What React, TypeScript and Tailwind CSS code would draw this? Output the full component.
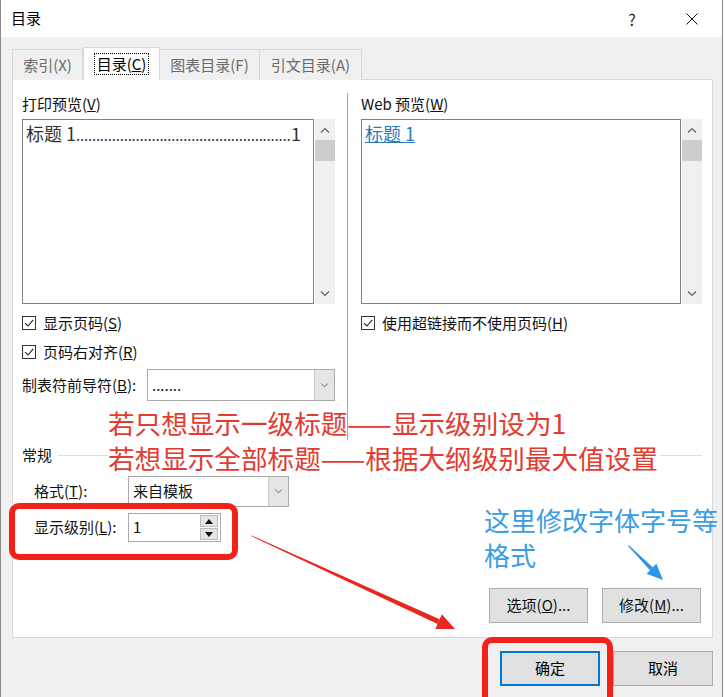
import React from 'react';

const CJK = "font-['Noto_Sans_CJK_SC','Microsoft_YaHei',sans-serif]";

function Check() {
  return (
    <span className="w-[14px] h-[14px] border border-[#333] bg-white flex items-center justify-center shrink-0">
      <svg viewBox="0 0 12 12" className="w-[12px] h-[12px]">
        <path d="M2 6.2 L5 9 L10.2 2.8" fill="none" stroke="#222" strokeWidth="1.1" />
      </svg>
    </span>
  );
}

function Chevron({ up }: { up?: boolean }) {
  return (
    <svg viewBox="0 0 10 6" className="w-[10px] h-[6px]">
      <path d={up ? 'M1 5.5 L5 1.5 L9 5.5' : 'M1 0.5 L5 4.5 L9 0.5'} fill="none" stroke="#606060" strokeWidth="1.2" />
    </svg>
  );
}

function ScrollBar() {
  return (
    <div className="w-[20px] ml-[1px] bg-[#f0f0f0] flex flex-col">
      <div className="h-[21px] flex items-center justify-center"><Chevron up /></div>
      <div className="h-[21px] bg-[#cdcdcd]" />
      <div className="flex-1" />
      <div className="h-[21px] flex items-center justify-center"><Chevron /></div>
    </div>
  );
}

function Combo({ width, height, text }: { width: string; height: string; text: string }) {
  return (
    <div className={`${width} ${height} border border-[#a9a9a9] bg-white flex`}>
      <div className="flex-1 pl-[4px] flex items-center text-[15px] text-[#111]">{text}</div>
      <div className="w-[20px] bg-[#e5e5e5] border-l border-[#c8c8c8] flex items-center justify-center">
        <svg viewBox="0 0 10 6" className="w-[9px] h-[5px]">
          <path d="M1 0.5 L5 4.5 L9 0.5" fill="none" stroke="#555" strokeWidth="1" />
        </svg>
      </div>
    </div>
  );
}

export default function App() {
  return (
    <div className={`relative w-[723px] h-[697px] overflow-hidden bg-[#f0f0f0] border-x border-[#8a8a8a] ${CJK}`}>
      {/* Title bar */}
      <div className="h-[37px] bg-white flex items-center pl-[10px]">
        <span className="text-[15px] text-black">目录</span>
        <span className="ml-auto text-[16px] text-[#222] w-[10px] text-center">?</span>
        <svg viewBox="0 0 12 12" className="w-[12px] h-[12px] ml-[49px] mr-[24px]">
          <path d="M0.5 0.5 L11.5 11.5 M11.5 0.5 L0.5 11.5" stroke="#111" strokeWidth="1" />
        </svg>
      </div>

      {/* Tabs */}
      <div className="flex items-end h-[33px] mt-[10px] pl-[11px] -mb-[1px] relative z-10 text-[15px]">
        <div className="w-[71px] h-[31px] border border-b-0 border-[#d9d9d9] bg-[#f0f0f0] flex items-center justify-center text-[#6a6a6a]">
          索引(X)
        </div>
        <div className="w-[77px] h-[33px] border border-b-0 border-[#d9d9d9] bg-white flex items-center justify-center text-black">
          <span className="border border-dotted border-black px-[2px] leading-[20px]">
            目录(<span className="underline">C</span>)
          </span>
        </div>
        <div className="w-[100px] h-[31px] border border-b-0 border-l-0 border-[#d9d9d9] bg-[#f0f0f0] flex items-center justify-center text-[#6a6a6a]">
          图表目录(F)
        </div>
        <div className="w-[102px] h-[31px] border border-b-0 border-l-0 border-[#d9d9d9] bg-[#f0f0f0] flex items-center justify-center text-[#6a6a6a]">
          引文目录(A)
        </div>
      </div>

      {/* Panel */}
      <div className="ml-[11px] w-[701px] h-[559px] border border-[#d9d9d9] bg-white flex flex-col pl-[9px] text-[15px] text-[#111]">
        <div className="flex mt-[13px]">
          {/* Left column */}
          <div className="w-[326px] border-r border-[#a6a6a6] pb-[39px]">
            <div className="h-[22px] leading-[22px]">打印预览(<span className="underline">V</span>)</div>
            <div className="flex mt-[4px] h-[185px]">
              <div className="w-[292px] border border-[#828282] bg-white">
                <div className="flex items-baseline pl-[3px] pr-[12px] pt-[1px] text-[18px] text-[#333] leading-[24px]">
                  <span className="whitespace-nowrap">标题 1</span>
                  <span className="whitespace-nowrap text-[15px] tracking-[-0.2px]">
                    ......................................................
                  </span>
                  <span className="ml-auto">1</span>
                </div>
              </div>
              <ScrollBar />
            </div>
            <div className="flex items-center gap-[7px] h-[22px] mt-[8px]">
              <Check />
              <span>显示页码(<span className="underline">S</span>)</span>
            </div>
            <div className="flex items-center gap-[7px] h-[22px] mt-[7px]">
              <Check />
              <span>页码右对齐(<span className="underline">R</span>)</span>
            </div>
            <div className="flex items-center h-[32px] mt-[6px]">
              <span className="w-[125px]">制表符前导符(<span className="underline">B</span>):</span>
              <Combo width="w-[188px]" height="h-[32px]" text="......." />
            </div>
          </div>

          {/* Right column */}
          <div className="pl-[13px]">
            <div className="h-[22px] leading-[22px]">Web 预览(<span className="underline">W</span>)</div>
            <div className="flex mt-[4px] h-[185px]">
              <div className="w-[320px] border border-[#828282] bg-white">
                <div className="pl-[3px] pt-[1px] text-[18px] leading-[24px] text-[#2b7cba] underline">标题 1</div>
              </div>
              <ScrollBar />
            </div>
            <div className="flex items-center gap-[7px] h-[22px] mt-[8px]">
              <Check />
              <span>使用超链接而不使用页码(<span className="underline">H</span>)</span>
            </div>
          </div>
        </div>

        {/* 常规 */}
        <div className="flex items-center h-[20px] mt-[5px]">
          <span>常规</span>
          <div className="flex-1 h-px bg-[#dcdcdc] ml-[6px] mr-[10px]" />
        </div>
        <div className="flex items-center mt-[11px] pl-[12px]">
          <span className="w-[94px]">格式(<span className="underline">T</span>):</span>
          <Combo width="w-[161px]" height="h-[31px]" text="来自模板" />
        </div>
        <div className="flex items-center mt-[6px] pl-[12px]">
          <span className="w-[94px]">显示级别(<span className="underline">L</span>):</span>
          <div className="w-[93px] h-[29px] border border-[#a9a9a9] bg-white flex items-center">
            <span className="flex-1 pl-[4px] text-[15px]">1</span>
            <div className="w-[18px] mr-[2px] flex flex-col gap-[1px]">
              <div className="h-[12px] bg-[#e5e5e5] border border-[#bdbdbd] flex items-center justify-center">
                <svg viewBox="0 0 8 5" className="w-[8px] h-[5px]"><path d="M0 5 L4 0 L8 5 Z" fill="#111" /></svg>
              </div>
              <div className="h-[12px] bg-[#e5e5e5] border border-[#bdbdbd] flex items-center justify-center">
                <svg viewBox="0 0 8 5" className="w-[8px] h-[5px]"><path d="M0 0 L4 5 L8 0 Z" fill="#111" /></svg>
              </div>
            </div>
          </div>
        </div>

        <div className="mt-auto flex justify-end gap-[14px] pr-[11px] pb-[14px]">
          <button className="w-[99px] h-[35px] bg-[#e1e1e1] border border-[#adadad] text-[15px]">
            选项(<span className="underline">O</span>)...
          </button>
          <button className="w-[99px] h-[35px] bg-[#e1e1e1] border border-[#adadad] text-[15px]">
            修改(<span className="underline">M</span>)...
          </button>
        </div>
      </div>

      {/* Bottom buttons */}
      <div className="flex justify-end gap-[13px] pr-[9px] mt-[13px]">
        <button className="w-[100px] h-[35px] bg-[#e1e1e1] border-2 border-[#0078d7] text-[15px] text-black">确定</button>
        <button className="w-[100px] h-[35px] bg-[#e1e1e1] border border-[#adadad] text-[15px] text-black">取消</button>
      </div>

      {/* Annotations */}
      <div className="absolute left-[107px] top-[408px] text-[26.6px] leading-[30px] text-[#e33b30] whitespace-nowrap">
        若只想显示一级标题——显示级别设为1
      </div>
      <div className="absolute left-[107px] top-[443px] text-[26.6px] leading-[30px] text-[#e33b30] whitespace-nowrap bg-white pr-[2px]">
        若想显示全部标题——根据大纲级别最大值设置
      </div>
      <div className="absolute left-[483px] top-[502px] text-[26px] leading-[35px] text-[#3a9de3] whitespace-nowrap">
        <div>这里修改字体字号等</div>
        <div>格式</div>
      </div>
      <div className="absolute left-[8px] top-[503px] w-[229px] h-[57px] border-[6px] border-[#f2221b] rounded-[10px]" />
      <div className="absolute left-[481px] top-[637px] w-[131px] h-[70px] border-[6px] border-[#f2221b] rounded-[10px]" />
      <svg className="absolute left-0 top-0 w-[725px] h-[697px] pointer-events-none" viewBox="0 0 725 697">
        <polygon points="250,536 250.3,535.4 438.6,619.3 436.6,623.9" fill="#e8281f" />
        <polygon points="454,629 440.9,614.3 434.3,628.9" fill="#e8281f" />
        <polygon points="627,546 627.8,545.3 652,567.4 649,570.2" fill="#2b95e9" />
        <polygon points="662,580 655.4,563.8 645.6,573.8" fill="#2b95e9" />
      </svg>
    </div>
  );
}
